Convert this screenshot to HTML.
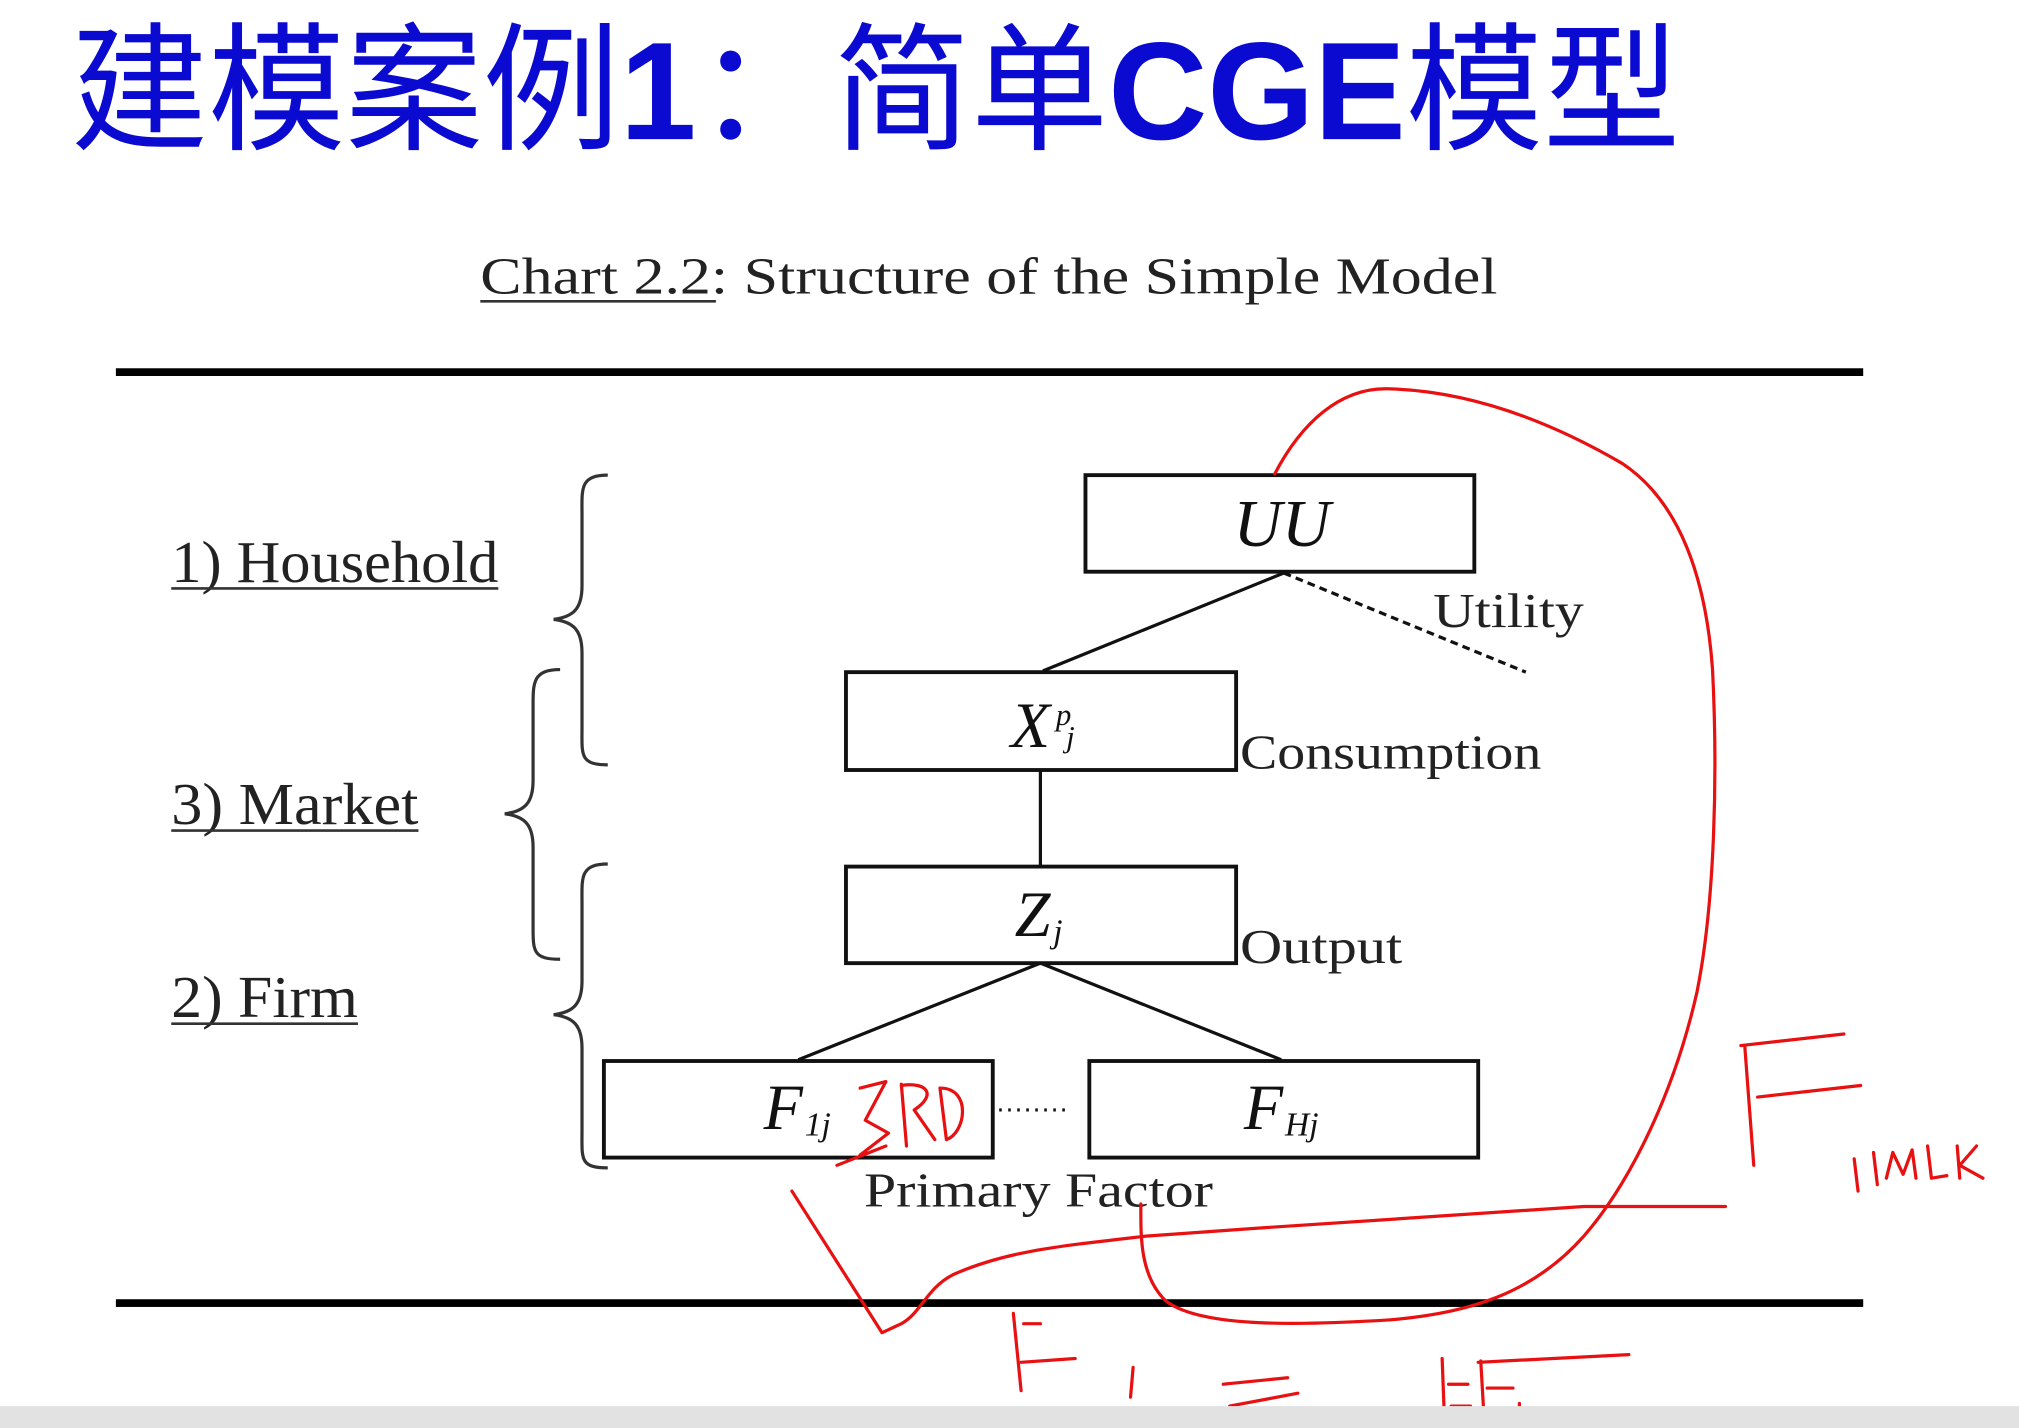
<!DOCTYPE html>
<html><head><meta charset="utf-8"><style>
html,body{margin:0;padding:0;background:#fff;}
svg{display:block;}
</style></head><body>
<svg width="2019" height="1428" viewBox="0 0 1568 1109" xmlns="http://www.w3.org/2000/svg">
<rect width="1568" height="1109" fill="#fff"/>
<text x="55" y="108" font-family="'Liberation Sans','Noto Sans CJK SC',sans-serif" font-size="108" fill="#0a0ad0" textLength="1250" lengthAdjust="spacingAndGlyphs">建模案例<tspan font-weight="bold">1</tspan>：简单<tspan font-weight="bold">CGE</tspan>模型</text>
<g font-family="'Liberation Serif',serif" fill="#222">
<text x="373" y="228" font-size="40" textLength="790" lengthAdjust="spacingAndGlyphs">Chart 2.2: Structure of the Simple Model</text>
</g>
<line x1="373" y1="234" x2="556" y2="234" stroke="#333" stroke-width="2"/>
<rect x="90" y="286" width="1357" height="6" fill="#000"/>
<rect x="90" y="1009" width="1357" height="6" fill="#000"/>
<g fill="none" stroke="#111" stroke-width="3">
<rect x="843" y="369" width="302" height="75"/>
<rect x="657" y="522" width="303" height="76"/>
<rect x="657" y="673" width="303" height="75"/>
<rect x="469" y="824" width="302" height="75"/>
<rect x="846" y="824" width="302" height="75"/>
</g>
<g stroke="#111" stroke-width="2.5" fill="none">
<line x1="997" y1="445" x2="810" y2="521"/>
<line x1="997" y1="445" x2="1185" y2="522" stroke-dasharray="6,4"/>
<line x1="808" y1="598" x2="808" y2="672"/>
<line x1="808" y1="748" x2="620" y2="823"/>
<line x1="808" y1="748" x2="995" y2="823"/>
<line x1="776" y1="862" x2="830" y2="862" stroke-dasharray="2,5"/>
</g>
<g fill="none" stroke="#333" stroke-width="2.5">
<path d="M472 369 C450 369 452 380 452 400 L452 455 C452 472 446 479 430 481 C446 483 452 490 452 507 L452 565 C452 586 450 594 472 594"/>
<path d="M435 520 C413 520 414 531 414 551 L414 606 C414 623 408 630 392 632 C408 634 414 641 414 658 L414 717 C414 738 413 745 435 745"/>
<path d="M472 671 C450 671 452 682 452 702 L452 762 C452 779 446 786 430 788 C446 790 452 797 452 814 L452 878 C452 900 450 907 472 907"/>
</g>
<g font-family="'Liberation Serif',serif" fill="#222" font-size="46">
<text x="133" y="452" textLength="254" lengthAdjust="spacingAndGlyphs">1) Household</text>
<text x="133" y="640" textLength="192" lengthAdjust="spacingAndGlyphs">3) Market</text>
<text x="133" y="790" textLength="145" lengthAdjust="spacingAndGlyphs">2) Firm</text>
</g>
<g stroke="#333" stroke-width="2">
<line x1="133" y1="457" x2="387" y2="457"/>
<line x1="133" y1="645" x2="325" y2="645"/>
<line x1="133" y1="795" x2="278" y2="795"/>
</g>
<g font-family="'Liberation Serif',serif" fill="#222" font-size="38">
<text x="1113" y="487" textLength="117" lengthAdjust="spacingAndGlyphs">Utility</text>
<text x="963" y="597" textLength="234" lengthAdjust="spacingAndGlyphs">Consumption</text>
<text x="963" y="748" textLength="126" lengthAdjust="spacingAndGlyphs">Output</text>
<text x="671" y="937" textLength="271" lengthAdjust="spacingAndGlyphs">Primary Factor</text>
</g>
<g font-family="'Liberation Serif',serif" font-style="italic" fill="#111">
<text x="958" y="424" font-size="52">UU</text>
<text x="785" y="580" font-size="50">X</text>
<text x="820" y="563" font-size="24">p</text><text x="828" y="580" font-size="24">j</text>
<text x="788" y="727" font-size="50">Z</text><text x="818" y="732" font-size="26">j</text>
<text x="593" y="877" font-size="50">F</text><text x="625" y="882" font-size="26">1j</text>
<text x="966" y="877" font-size="50">F</text><text x="998" y="882" font-size="26">Hj</text>
</g>
<g fill="none" stroke="#e81010" stroke-width="2.5" stroke-linecap="round" stroke-linejoin="round">
<path d="M990 368 C1010 330 1040 300 1080 302 C1140 304 1200 325 1260 360 C1305 390 1325 450 1330 520 C1334 600 1332 700 1318 770 C1300 850 1265 920 1230 960 C1190 1005 1140 1020 1080 1025 C1000 1030 930 1030 905 1010 C885 990 886 960 886 935"/>
<path d="M615 925 L685 1035 L700 1028 C715 1020 720 1000 740 990 C780 972 820 968 890 960 C1000 952 1100 945 1230 937 L1340 937"/>
<path d="M1355 812 L1362 905"/><path d="M1352 812 L1432 803"/><path d="M1365 852 L1445 843"/>
<path d="M1440 900 L1443 925"/><path d="M1455 895 L1458 920"/><path d="M1465 915 L1470 895 L1478 912 L1485 893 L1488 915"/><path d="M1497 890 L1500 915 L1512 913"/><path d="M1520 890 L1522 915 M1535 890 L1522 905 L1540 915"/>
<path d="M668 845 L688 840 L672 870 L690 880 L668 897 M650 905 L688 890"/>
<path d="M700 842 L704 890 M700 843 C720 840 728 850 710 862 L726 885"/>
<path d="M730 845 L735 885 M730 845 C755 845 750 880 735 885"/>
<path d="M787 1020 L793 1080"/><path d="M795 1028 L808 1028"/><path d="M793 1058 L835 1055"/>
<path d="M880 1062 L878 1085"/>
<path d="M950 1075 L1000 1070"/><path d="M955 1092 L1008 1082"/>
<path d="M1120 1055 L1122 1108"/><path d="M1125 1075 L1140 1075"/><path d="M1127 1092 L1142 1092"/>
<path d="M1150 1057 L1153 1109"/><path d="M1148 1058 L1265 1052"/><path d="M1155 1078 L1175 1078"/><path d="M1180 1090 L1180 1102"/>
</g>
<rect x="0" y="1092" width="1568" height="17" fill="#e2e2e2"/>
</svg>
</body></html>
